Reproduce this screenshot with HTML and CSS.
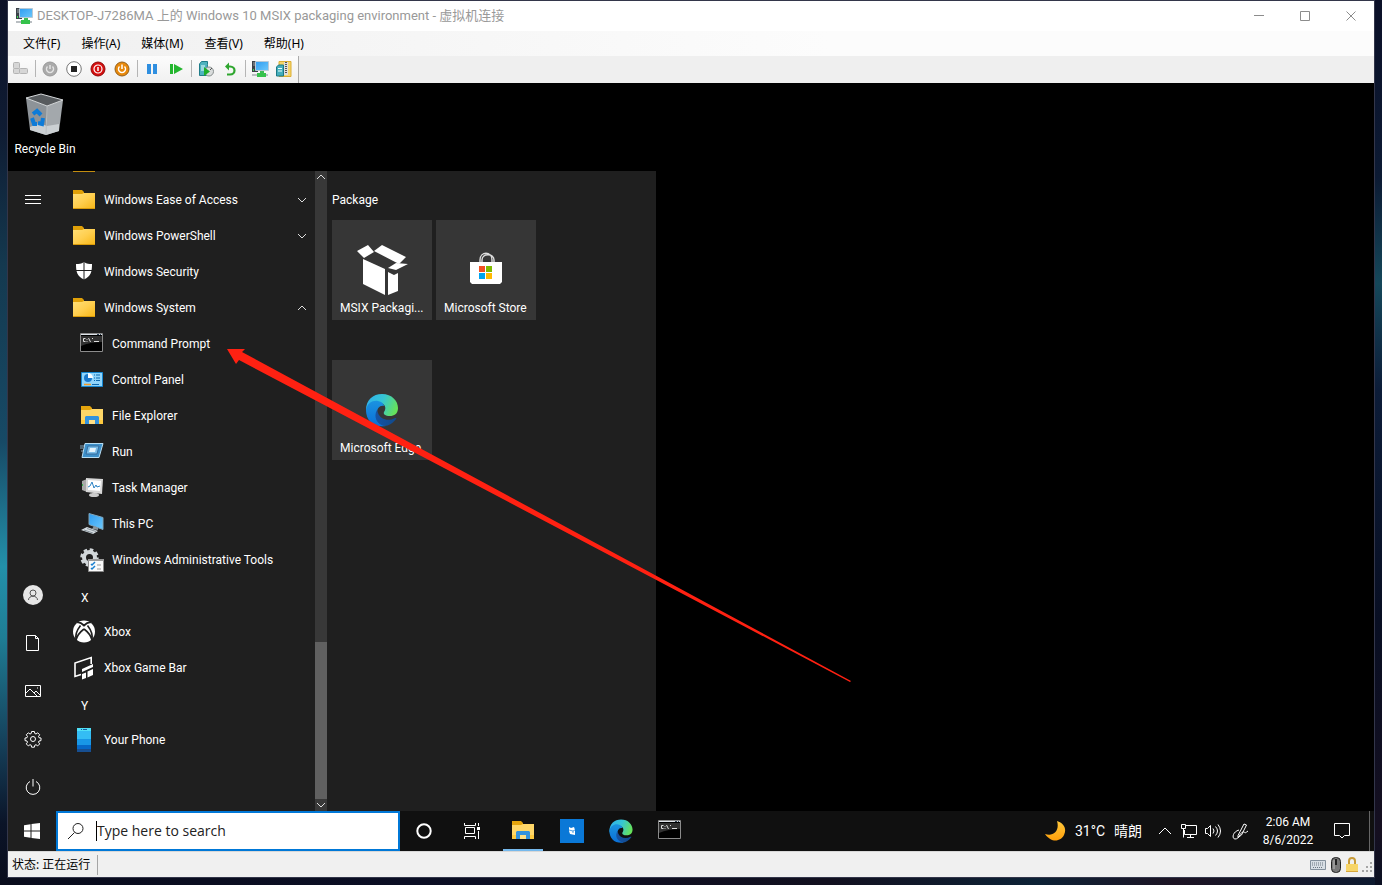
FILE: index.html
```html
<!DOCTYPE html>
<html lang="zh-CN">
<head>
<meta charset="utf-8">
<title>虚拟机连接</title>
<link rel="stylesheet" href="styles.css">
</head>
<body>
<svg class="defs" aria-hidden="true">
  <defs>
    <linearGradient id="gFolder" x1="0" y1="0" x2="1" y2="1"><stop offset="0" stop-color="#ffdf77"/><stop offset=".5" stop-color="#ffcf50"/><stop offset="1" stop-color="#f7b718"/></linearGradient>
    <linearGradient id="gScreen" x1="0" y1="0" x2="1" y2="1"><stop offset="0" stop-color="#2f9cf0"/><stop offset="1" stop-color="#6cc8fb"/></linearGradient>
    <linearGradient id="gEdgeTop" x1="0" y1=".2" x2="1" y2=".5"><stop offset="0" stop-color="#2fb0ec"/><stop offset=".5" stop-color="#36c6d4"/><stop offset="1" stop-color="#66e25a"/></linearGradient>
    <linearGradient id="gEdgeMid" x1="0" y1="0" x2="0" y2="1"><stop offset="0" stop-color="#1b93e0"/><stop offset="1" stop-color="#0a6fd6"/></linearGradient>
    <linearGradient id="gEdgeLow" x1="0" y1="0" x2="1" y2="0"><stop offset="0" stop-color="#1553a5"/><stop offset="1" stop-color="#114a8b"/></linearGradient>
    <linearGradient id="gMoon" x1="0" y1="0" x2="0" y2="1"><stop offset="0" stop-color="#ffc83c"/><stop offset="1" stop-color="#ff9f0a"/></linearGradient>
    <symbol id="folder" viewBox="0 0 24 24"><path d="M1 2h9l2 2v3H1z" fill="#e0a008"/><path d="M1 6h9l2-1h11v15H1z" fill="url(#gFolder)"/><path d="M1 20h22v1H1z" fill="#d99a0a"/></symbol>
    <symbol id="explorer" viewBox="0 0 24 24"><path d="M1 2h9l2 2v3H1z" fill="#e5a50d"/><path d="M1 6h9l2-1h11v15H1z" fill="#ffd768"/><path d="M1 16h22v4H1z" fill="#fdc93f"/><path d="M5 20v-7l1-1h12l1 1v7h-4v-4H9v4z" fill="#3392dd"/><path d="M9 16h6v4H9z" fill="#ffdf85"/></symbol>
    <symbol id="cmd" viewBox="0 0 24 24"><path d="M.5 1.500h22v18H.5z" fill="#000" stroke="#8b8b8b"/><path d="M1 2h21v1H1z" fill="#dfe4ea"/><path d="M17 2h2v1h-2zm3 0h1v1h-1z" fill="#345"/><path d="M1 4h21v6Q10 10 1 14z" fill="#303030"/><path d="M5.500 6.500h-2v3h2M7 7v.8M7 9v.8M8.500 6l2 4M12 6l1 1M14 9.500h5" stroke="#ddd" fill="none"/></symbol>
    <symbol id="edge" viewBox="0 0 36 36"><path d="M2 18C2 8 9 2 18 2c10 0 16 7 16 14 0 6-4 8-8 8-5 0-7-2-6-4 3-4 1-9-5-9-7 0-12 4-13 10z" fill="url(#gEdgeTop)"/><path d="M2 18C3 11 9 8 14 9c5 1 6 4 6 5-4-1-7 2-7 7 0 7 5 11 9 13C10 36 2 29 2 18z" fill="url(#gEdgeMid)"/><path d="M13 18c-4 7 0 14 7 16 5 0 9-3 12-7 1-1 0-1-1-1-7 4-15 1-17-5z" fill="url(#gEdgeLow)"/></symbol>
    <symbol id="server" viewBox="0 0 18 18"><path d="M1 1h6v11H1z" fill="#3b4148"/><path d="M2 3h4M2 5h4" stroke="#9ba2a8"/><path d="M2 9h1v2H2z" fill="#3be04e"/><path d="M4.500 1.500h13v9h-13z" fill="url(#gScreen)" stroke="#b9c9d6"/><path d="M9 11h4v3H9z" fill="#3dbb54"/><path d="M1 14h16v2H1z" fill="#b9bec2"/><path d="M6 13h9v4H6z" fill="#35c24b"/></symbol>
    <symbol id="down" viewBox="0 0 12 12"><path d="M2 4l4 4 4-4" fill="none" stroke="currentColor"/></symbol>
    <symbol id="up" viewBox="0 0 12 12"><path d="M2 8l4-4 4 4" fill="none" stroke="currentColor"/></symbol>
  </defs>
</svg>

<main class="window">
  <header class="titlebar">
    <svg class="i18"><use href="#server"/></svg>
    <h1 class="title">DESKTOP-J7286MA 上的 Windows 10 MSIX packaging environment - 虚拟机连接</h1>
    <div class="controls">
      <button aria-label="最小化"><svg width="11" height="11"><path d="M0 4.500h10"/></svg></button>
      <button aria-label="最大化"><svg width="11" height="11"><path d="M.5.5h9v9h-9z"/></svg></button>
      <button aria-label="关闭"><svg width="11" height="11"><path d="M.5.5l9 9M9.500.5l-9 9"/></svg></button>
    </div>
  </header>
  <nav class="menubar">
    <button>文件(F)</button><button>操作(A)</button><button>媒体(M)</button><button>查看(V)</button><button>帮助(H)</button>
  </nav>
  <div class="toolbar">
    <div class="tools">
      <button aria-label="Ctrl+Alt+Del"><svg class="i16" viewBox="0 0 16 16"><g fill="#d6d6d6" stroke="#b4b4b4"><rect x="1.500" y="1.500" width="6" height="6" rx="1"/><rect x="1.500" y="7.500" width="6" height="5" rx="1"/><rect x="7.500" y="7.500" width="8" height="5" rx="1"/></g></svg></button>
      <i class="sep"></i>
      <button aria-label="启动"><svg class="i16" viewBox="0 0 16 16"><circle cx="8" cy="8" r="7" fill="#aaa" stroke="#999"/><path d="M5.500 5.500a3.500 3.500 0 1 0 5 0M8 4v4" fill="none" stroke="#e4e4e4" stroke-width="1.500"/></svg></button>
      <button aria-label="强行关闭"><svg class="i16" viewBox="0 0 16 16"><circle cx="8" cy="8" r="7.300" fill="#fff" stroke="#777"/><path d="M5 5h6v6H5z" fill="#222"/></svg></button>
      <button aria-label="关机"><svg class="i16" viewBox="0 0 16 16"><circle cx="8" cy="8" r="7" fill="#d60f0f" stroke="#8f0909"/><circle cx="8" cy="8" r="4" fill="none" stroke="#fff" stroke-width="1.200"/><path d="M8 6v4" stroke="#fff" stroke-width="1.500"/></svg></button>
      <button aria-label="保存"><svg class="i16" viewBox="0 0 16 16"><circle cx="8" cy="8" r="7" fill="#e8890c" stroke="#94601a"/><path d="M5.500 5.500a3.500 3.500 0 1 0 5 0M8 3.500V8" fill="none" stroke="#fff" stroke-width="1.500"/></svg></button>
      <i class="sep"></i>
      <button aria-label="暂停"><svg class="i16" viewBox="0 0 16 16"><path d="M3 3h4v10H3zm6 0h4v10H9z" fill="#2f8fe0"/></svg></button>
      <button aria-label="重置"><svg class="i16" viewBox="0 0 16 16"><path d="M2 3h3v10H2zm4 0l9 5-9 5z" fill="#24b62f"/></svg></button>
      <i class="sep"></i>
      <button aria-label="检查点"><svg class="i16" viewBox="0 0 16 16"><path d="M1.500 3l2-2.500h6v3l-1 11h-7z" fill="#4fb3bf" stroke="#1f7c89"/><path d="M3 5h4M3 7h4M3 9h4" stroke="#eaffff"/><circle cx="11" cy="10.500" r="4.500" fill="#d9dcdc" stroke="#868d8d"/><path d="M6 6l6 4.500L6 15z" fill="#1fae2a"/><path d="M12 9l2-2" stroke="#555"/></svg></button>
      <button aria-label="还原"><svg class="i16" viewBox="0 0 16 16"><path d="M5 13.500h3c6 0 6-8 0-8H5" fill="none" stroke="#2fa62f" stroke-width="2.200"/><path d="M3 5.500l4-4v8z" fill="#2fa62f"/></svg></button>
      <i class="sep"></i>
      <button aria-label="增强会话"><svg class="i18"><use href="#server"/></svg></button>
      <button aria-label="共享"><svg class="i16" viewBox="0 0 16 16"><path d="M3 .5h12v15H3z" fill="#f5d56a" stroke="#dcae35"/><path d="M8 1h4v13H8z" fill="#dedede"/><path d="M10 1v12" stroke="#555" stroke-width="2" stroke-dasharray="1 1"/><path d="M.5 6l2-2h5v11H.5z" fill="#45aebb" stroke="#1c7986"/><path d="M2 7.500h4M2 10h4" stroke="#eff"/></svg></button>
    </div>
  </div>

  <section class="vm">
    <div class="desktop">
      <button class="shortcut">
        <svg width="40" height="44" viewBox="0 0 40 44"><path d="M1 5L16 1l22 6-16 6z" fill="#575b5e"/><path d="M1 5l21 8-1 29-16-5z" fill="#8d9398"/><path d="M22 13l16-6-4 31-13 4z" fill="#a3a8ac"/><path d="M5 34l9-4 8 3 12-2v7l-13 4-16-5z" fill="#cbd0d3"/><path d="M1 5L16 1l22 6-16 6z" fill="none" stroke="#d5d8da"/><path d="M22 13l-1 29" stroke="#b9bec1"/><g fill="none" stroke="#0d7bd8" stroke-width="4"><path d="M8 21l4-3 4 4M7 25l2 6h3M18 25l-1 6-4-1"/></g></svg>
        <span>Recycle Bin</span>
      </button>
    </div>

    <div class="start">
      <div class="rail">
        <button aria-label="Expand"><svg width="16" height="16"><path d="M0 4.500h16M0 8.500h16M0 12.500h16"/></svg></button>
        <div class="rail-end">
          <button aria-label="User"><svg width="20" height="20"><circle cx="10" cy="10" r="10" fill="#e6e6e6" stroke="none"/><g stroke="#555"><circle cx="10" cy="8" r="3"/><path d="M5.500 15c0-5 9-5 9 0"/></g></svg></button>
          <button aria-label="Documents"><svg width="16" height="16"><path d="M1.500.5h9l3 3v12h-12zM10.500.5v3h3"/></svg></button>
          <button aria-label="Pictures"><svg width="16" height="16"><path d="M.5 2.500h15v11H.5zM1 10l4-4 7 7M9 10l2-2 4 4M12 5h1"/></svg></button>
          <button aria-label="Settings"><svg width="18" height="18" viewBox="0 0 18 18"><circle cx="9" cy="9" r="2.500"/><path d="M7.600 1.500h2.800l.4 2 1.200.5 1.700-1.200 2 2L14.500 6.500l.5 1.200 2 .3v2.600l-2 .4-.5 1.200 1.200 1.700-2 2-1.700-1.200-1.200.5-.4 2H7.600l-.4-2-1.200-.5-1.700 1.200-2-2L3.500 12.200 3 11l-2-.4V8l2-.3.500-1.200L2.300 4.800l2-2L6 4l1.200-.5z"/></svg></button>
          <button aria-label="Power"><svg width="16" height="16"><path d="M5 2.500a6.800 6.800 0 1 0 6 0M8 0v7.500"/></svg></button>
        </div>
      </div>
      <div class="apps">
        <div class="sliver"><i></i></div>
        <button class="app"><svg><use href="#folder"/></svg><span>Windows Ease of Access</span><svg class="chev"><use href="#down"/></svg></button>
        <button class="app"><svg><use href="#folder"/></svg><span>Windows PowerShell</span><svg class="chev"><use href="#down"/></svg></button>
        <button class="app"><svg viewBox="0 0 24 24"><path d="M12 2c3 2 5 2 8 2 0 8-1 12-8 15.500C5 16 4 12 4 4c3 0 5 0 8-2z" fill="#fff"/><path d="M12 2v18M4 10.500h17" stroke="#1f1f1f"/></svg><span>Windows Security</span></button>
        <button class="app"><svg><use href="#folder"/></svg><span>Windows System</span><svg class="chev"><use href="#up"/></svg></button>
        <button class="app sub"><svg><use href="#cmd"/></svg><span>Command Prompt</span></button>
        <button class="app sub"><svg viewBox="0 0 24 24"><path d="M1.500 4.500h21v14h-21z" fill="#8fd4fb" stroke="#1687d2"/><circle cx="8" cy="10" r="4" fill="#1978cc"/><path d="M8 10V5a5 5 0 0 1 5 5z" fill="#f8fcff"/><path d="M14 7h1M16 7h4M14 10h1M16 10h4M14 12.500h1M16 12.500h4M12 16.500h7" stroke="#0d68ad"/><path d="M4 16.500h7" stroke="#f39b25" stroke-width="1.500"/></svg><span>Control Panel</span></button>
        <button class="app sub"><svg><use href="#explorer"/></svg><span>File Explorer</span></button>
        <button class="app sub"><svg viewBox="0 0 24 24"><path d="M5 3.500h18l-4 14H2z" fill="#3c8fc9" stroke="#b8def4"/><path d="M8 6h11l-2 8H6z" fill="#79bce7" stroke="#356c9e"/><path d="M10 8h6l-1 4H9z" fill="#e4f3fd"/><path d="M0 6h4M0 8h3M1 11h2" stroke="#8aaac0"/></svg><span>Run</span></button>
        <button class="app sub"><svg viewBox="0 0 24 24"><path d="M2 5l5-2v13l-5-2z" fill="#aaa"/><path d="M6 2l17 1-1 15-16-2z" fill="#d7d7d7"/><path d="M8 4l13 1-1 10-12-1z" fill="#fff"/><path d="M8 11l2-1 2-4 2 6 2-3 1 2 3-1" fill="none" stroke="#2d83c4"/><path d="M12 17h5v2h-5z" fill="#999"/><ellipse cx="14" cy="19" rx="5" ry="2" fill="#ccc"/><path d="M2 8h1v2H2z" fill="#39b54a"/></svg><span>Task Manager</span></button>
        <button class="app sub"><svg viewBox="0 0 24 24"><path d="M9 1.500l14 4v12l-14-5z" fill="url(#gScreen)" stroke="#7fa5bb"/><path d="M14 14l4 2v2l-6-1z" fill="#8a959c"/><path d="M1 18l6-3 11 4-5 3z" fill="#d6dde1"/><path d="M4 18l9 3M7 16.500l9 3" stroke="#8b969e"/></svg><span>This PC</span></button>
        <button class="app sub"><svg viewBox="0 0 24 24"><circle cx="9.500" cy="9.500" r="5.500" fill="none" stroke="#d2d7da" stroke-width="4"/><circle cx="9.500" cy="9.500" r="8" fill="none" stroke="#d2d7da" stroke-width="2.500" stroke-dasharray="3.600 2.680"/><path d="M8.500 11.500h15v12h-15z" fill="#fafafa" stroke="#8a8a8a"/><path d="M8 11h16v2H8z" fill="#999"/><path d="M11 16l1 1 3-3M11 20l1 1 3-3" fill="none" stroke="#1b80d0" stroke-width="1.500"/><path d="M17 17h4M17 21h4" stroke="#999"/></svg><span>Windows Administrative Tools</span></button>
        <button class="app letter">X</button>
        <button class="app"><svg viewBox="0 0 24 24"><circle cx="12" cy="11.500" r="11" fill="#fff"/><path d="M5 2.500c3-1 6 2 7 3 1-1 4-4 7-3" fill="none" stroke="#1f1f1f" stroke-width="1.800"/><path d="M8.500 5.500C5 10 3 15 4 20M15.500 5.500C19 10 21 15 20 20M12 9C8 12 5 16 4 20M12 9c4 3 7 7 8 11" fill="none" stroke="#1f1f1f" stroke-width="1.600"/></svg><span>Xbox</span></button>
        <button class="app"><svg viewBox="0 0 24 24"><path d="M19.200 8V1.500L3 7v13.500l6-2" fill="none" stroke="#fff" stroke-width="1.600"/><path d="M10 13l11-5v3l-11 5zM10 18l4-1.500V22l-4 1.500zM15.500 15.500l5.500-2.500v6l-5.500 2.500z" fill="#fff"/></svg><span>Xbox Game Bar</span></button>
        <button class="app letter">Y</button>
        <button class="app"><svg viewBox="0 0 24 24"><path d="M5 0h14v4H5z" fill="#50e0f7"/><path d="M5 3h14v8H5z" fill="#34bdf4"/><path d="M5 11h14v6H5z" fill="#1897e6"/><path d="M5 17h14v4H5z" fill="#0668c7"/><path d="M5 21h14v3H5z" fill="#174f91"/><path d="M9 1.500h1M11 1.500h4" stroke="#155a9d"/></svg><span>Your Phone</span></button>
      </div>
      <div class="scroll">
        <svg class="chev"><use href="#up"/></svg>
        <div class="above"></div><div class="thumb"></div>
        <svg class="chev"><use href="#down"/></svg>
      </div>
      <div class="tiles">
        <h2>Package</h2>
        <div class="tile-row">
          <button class="tile"><svg width="52" height="52" viewBox="0 0 52 52"><path d="M1 7l11-6 6 7-10 6zM18 7l8-6 24 12-7 7z" fill="#fff"/><path d="M7 15l22 10v26L7 40zM32 28l6 3 4-2v18l-10 4z" fill="#fff"/><path d="M32 24l8-5 12 1-12 6z" fill="#fff"/></svg><span>MSIX Packagi...</span></button>
          <button class="tile"><svg width="32" height="52" viewBox="0 0 32 52"><path d="M10 19v-3c0-9 12-9 12 0v3M12 19v-3c0-7 12-7 12 0v3" fill="none" stroke="#ddd" stroke-width="1.400"/><path d="M0 18h32v20l-2 2H2l-2-2z" fill="#fff"/><path d="M9 22h6v6H9z" fill="#f25022"/><path d="M16 22h6v6h-6z" fill="#7fba00"/><path d="M9 29h6v6H9z" fill="#00a4ef"/><path d="M16 29h6v6h-6z" fill="#ffb900"/></svg><span>Microsoft Store</span></button>
        </div>
        <div class="tile-row">
          <button class="tile"><svg width="36" height="52" viewBox="0 0 36 52"><use href="#edge" y="8" width="36" height="36"/></svg><span>Microsoft Edge</span></button>
        </div>
      </div>
    </div>

    <footer class="taskbar">
      <button class="win" aria-label="Start"><svg width="16" height="16"><path d="M0 2.200l6.500-1v6.300H0zM7.500 1L16 0v7.500H7.500zM0 8.500h6.500v6.300l-6.500-1zM7.500 8.500H16V16l-8.500-1z" fill="#fff"/></svg></button>
      <label class="search"><svg width="18" height="18"><circle cx="11" cy="6.500" r="5"/><path d="M7.500 10.500L1 17"/></svg><input type="text" placeholder="Type here to search" aria-label="Type here to search"></label>
      <button class="task" aria-label="Cortana"><svg width="18" height="18"><circle cx="9" cy="9" r="6.700" fill="none" stroke="#fff" stroke-width="2"/></svg></button>
      <button class="task" aria-label="Task View"><svg width="18" height="18"><path d="M1.500 1v2.500h11V1M1.500 17v-2.500h11V17M2.500 5.500h9v6h-9zM15.500 1v3M15.500 9v8" fill="none" stroke="#fff"/><path d="M14 5h3v3h-3z" fill="#fff"/></svg></button>
      <div class="pinned">
        <button class="task open" aria-label="File Explorer"><svg width="24" height="24"><use href="#explorer"/></svg></button>
        <button class="task" aria-label="MSIX Packaging Tool"><svg width="24" height="24"><path d="M0 0h24v24H0z" fill="#0a78d7"/><path d="M9 8l2 1 3-1 1 3v5l-5-1-1-3z" fill="#fff"/><path d="M9 11l4 1 2-1M13 12v2" stroke="#0a78d7" fill="none" stroke-width=".7"/></svg></button>
        <button class="task" aria-label="Microsoft Edge"><svg width="26" height="26"><use href="#edge"/></svg></button>
        <button class="task" aria-label="Command Prompt"><svg width="24" height="24"><use href="#cmd"/></svg></button>
      </div>
      <div class="tray">
        <button class="weather"><svg width="22" height="22"><path d="M13 1c7 2 10 8 7 14S8 24 1 14c8 3 15-3 12-13z" fill="url(#gMoon)"/></svg><span>31°C</span><span>晴朗</span></button>
        <button aria-label="Hidden icons"><svg width="14" height="14"><path d="M1 10l6-6 6 6"/></svg></button>
        <button aria-label="Network"><svg width="18" height="16"><path d="M6 2.500h10.500v9h-12V7M7 14.500h7M10.500 12v2M1.500 1.500h4v4h-4zM3.500 5.500v9"/></svg></button>
        <button aria-label="Volume"><svg width="18" height="16"><path d="M1.500 5.500h2l3-3v11l-3-3h-2zM9 5.500q2 2.500 0 5M11.500 3.500q4 4.500 0 9M14 1.500q5 6.500 0 13"/></svg></button>
        <button class="pen" aria-label="Ink"><svg width="18" height="18"><path d="M6 13.500L12 2l2.500 1-5 10L6 15.500zM7 8c-7 2-7 9-4 9 5 0 4-6 8-7 3-1 0 3 5-1"/></svg></button>
        <button class="clock"><span>2:06 AM</span><span>8/6/2022</span></button>
        <button class="notes" aria-label="Notifications"><svg width="18" height="18"><path d="M1.500 1.500h15v12h-5L9 16l-2.500-2.500h-5z"/></svg></button>
      </div>
    </footer>
  </section>

  <footer class="status">
    <span class="state">状态: 正在运行</span>
    <div class="status-icons">
      <svg width="16" height="10"><path d="M.5.5h15v9H.5z" fill="#d8dfe5" stroke="#84919d"/><path d="M2 3h12M2 5h12M3 7.500h10" stroke="#6a7681" stroke-dasharray="1 1"/></svg>
      <svg width="10" height="16"><rect x=".5" y=".5" width="9" height="15" rx="4" fill="#777" stroke="#222"/><path d="M5 2v6" stroke="#222" stroke-width="2"/><path d="M3 3v9" stroke="#bbb"/></svg>
      <svg width="12" height="16"><path d="M3 8V4c0-4 6-4 6 0v4" fill="none" stroke="#c89b38" stroke-width="2"/><path d="M0 7h12v8H0z" fill="#f7d568"/><path d="M0 14h12v1H0z" fill="#d7a63a"/></svg>
      <svg class="grip" width="12" height="12"><path d="M8 1h2v2H8zM4 5h2v2H4zM8 5h2v2H8zM0 9h2v2H0zM4 9h2v2H4zM8 9h2v2H8z" fill="#a5a5a5"/></svg>
    </div>
  </footer>
  <svg class="arrow" width="625" height="334" viewBox="0 0 625 334"><path d="M0 0L18 0 15 3 624 332 623 333 12 11 9 15z" fill="#ff2112"/></svg>
</main>
</body>
</html>
```
FILE: styles.css
```css
* { box-sizing: border-box; }

body {
  margin: 0;
  min-height: 100vh;
  display: flex;
  padding: 0 7px 7px;
  font: 12px/16px "Noto Sans", "Noto Sans CJK SC", sans-serif;
  background:
    linear-gradient(#0e1228, #0f1c33 15%, #14394f 30%, #174a66 50%, #2390aa 64%, #1f7d95 72%, #15405a 84%, #0b1428 93%, #090c1c) left / 7px 100% no-repeat,
    linear-gradient(#0b1028, #0c1a33 20%, #15475a 32%, #0c1c38 44%, #080e22 70%, #150f20 94%, #0b1022) right / 7px 100% no-repeat,
    linear-gradient(90deg, #090c1c, #0b0e24 30%, #12101f 60%, #0d2236 75%, #1d1424 85%, #0d1a30);
}

button {
  border: 0;
  padding: 0;
  background: none;
  color: inherit;
  font: inherit;
  display: flex;
  align-items: center;
  justify-content: center;
}

.defs { position: absolute; width: 0; height: 0; }
.i16 { width: 16px; height: 16px; }
.i18 { width: 18px; height: 18px; }

.window {
  position: relative;
  flex: 1;
  min-width: 0;
  display: flex;
  flex-direction: column;
  border: 1px solid #33364a;
}

.titlebar {
  height: 30px;
  display: flex;
  align-items: center;
  gap: 4px;
  padding-left: 7px;
  background: #fff;
  color: #999;
}
.title {
  flex: 1;
  margin: 0;
  font: 400 13px/16px Roboto, "Noto Sans CJK SC", sans-serif;
}
.controls { display: flex; align-self: stretch; }
.controls button { width: 46px; }
.controls svg { fill: none; stroke: #8c8c8c; }

.menubar {
  height: 25px;
  display: flex;
  gap: 21px;
  padding-left: 15px;
  background: linear-gradient(90deg, #f0f0f0, #fcfcfc 60%);
  color: #000;
}

.toolbar { height: 27px; display: flex; background: #efefef; }
.tools {
  display: flex;
  align-items: center;
  padding: 0 2px 2px 0;
  border-right: 1px solid #aaa;
  background: linear-gradient(#fcfcfc, #f0f0f0);
}
.tools button { width: 24px; height: 24px; }
.sep { width: 1px; height: 17px; margin: 0 2px 0 3px; background: #b5b5b5; }

.vm {
  flex: 1;
  display: flex;
  flex-direction: column;
  background: #000;
  color: #fff;
  font-family: Roboto, "Noto Sans CJK SC", sans-serif;
}
.desktop { height: 88px; padding: 10px 0 0; }
.shortcut { width: 74px; flex-direction: column; gap: 4px; }

.start { flex: 1; width: 648px; display: flex; background: #1f1f1f; }
.rail {
  width: 48px;
  padding-top: 4px;
  display: flex;
  flex-direction: column;
  justify-content: space-between;
}
.rail button { width: 48px; height: 48px; padding-left: 2px; }
.rail svg { fill: none; stroke: #fff; }

.apps { width: 259px; }
.sliver { height: 11px; padding-left: 17px; }
.sliver i { display: block; width: 22px; height: 1px; background: #c38d10; }
.app {
  width: 100%;
  height: 36px;
  padding-left: 16px;
  gap: 8px;
  justify-content: flex-start;
  text-align: left;
}
.app svg { width: 24px; height: 24px; flex: none; }
.app .chev { width: 12px; height: 12px; margin: 0 7px 0 auto; color: #ddd; }
.sub { padding-left: 24px; }
.letter { padding: 4px 0 0 25px; }

.scroll { width: 12px; display: flex; flex-direction: column; background: #383838; }
.scroll .chev { width: 12px; height: 12px; color: #ddd; }
.above { flex: 459; }
.thumb { flex: 157; background: #606060; }

.tiles { padding: 21px 5px; display: flex; flex-direction: column; }
.tiles h2 { margin: 0 0 12px; font-size: 12px; line-height: 16px; font-weight: 400; }
.tile-row { display: flex; gap: 4px; margin-bottom: 40px; }
.tile {
  width: 100px;
  height: 100px;
  padding: 24px 8px 4px;
  flex-direction: column;
  background: #363636;
}
.tile span { align-self: flex-start; white-space: nowrap; margin-top: 4px; }

.taskbar { height: 40px; display: flex; background: #101010; }
.win { width: 48px; background: #1f1f1f; }
.search {
  width: 344px;
  display: flex;
  align-items: center;
  gap: 11px;
  padding-left: 9px;
  border: 2px solid #0078d7;
  background: #fff;
}
.search svg { fill: none; stroke: #222; }
.search input {
  flex: 1;
  min-width: 0;
  height: 20px;
  padding: 0;
  border: 0;
  border-left: 1px solid #000;
  outline: 0;
  font: 14px/20px "Open Sans", sans-serif;
}
.search input::placeholder { color: #222; opacity: 1; }
.task { width: 48px; }
.pinned { display: flex; gap: 1px; padding-left: 3px; }
.open {
  background: linear-gradient(#76b9ed, #76b9ed) bottom / 40px 2px no-repeat;
}
.tray {
  margin-left: auto;
  display: flex;
  margin-right: 4px;
  border-right: 1px solid #666;
}
.tray button { width: 24px; }
.tray svg { fill: none; stroke: #fff; }
.tray .weather { width: auto; gap: 9px; margin-right: 11px; font-size: 14px; }
.weather svg { stroke: none; }
.tray .pen { width: 32px; }
.tray .clock { width: 62px; flex-direction: column; line-height: 18px; }
.tray .notes { width: 45px; margin-right: 5px; }

.status {
  height: 26px;
  display: flex;
  align-items: center;
  justify-content: space-between;
  padding-left: 4px;
  border-top: 1px solid #d8d8d8;
  background: #f0f0f0;
  color: #000;
}
.state { padding-right: 7px; border-right: 1px solid #a5a5a5; line-height: 20px; }
.status-icons { display: flex; align-items: center; gap: 5px; }
.grip { align-self: flex-end; margin-left: -1px; }

.arrow { position: absolute; left: 219px; top: 348px; pointer-events: none; }
```
